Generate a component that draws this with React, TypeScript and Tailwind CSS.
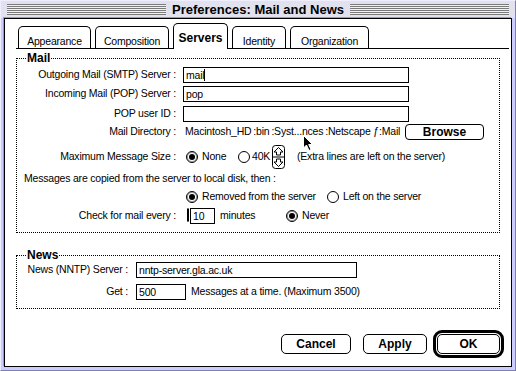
import React from 'react';

const body = "font-['Liberation_Sans',Arial,sans-serif] text-[10.5px] tracking-[-0.2px] text-black whitespace-nowrap";
const bold = "font-['Liberation_Sans',Arial,sans-serif] font-bold text-[12px] tracking-normal text-black";
const stripes =
  'flex-1 h-[11px] bg-[repeating-linear-gradient(to_bottom,#7a7a7a_0_1px,#f2f2f2_1px_2px)]';

function Radio({ on = false }: { on?: boolean }) {
  return (
    <span
      className={
        on
          ? 'shrink-0 w-[12px] h-[12px] rounded-full border border-black bg-white flex items-center justify-center shadow-[inset_0_0_0_1px_#9a9a9a]'
          : 'shrink-0 w-[12px] h-[12px] rounded-full border border-black bg-white'
      }
    >
      {on && <span className="w-[6px] h-[6px] rounded-full bg-black" />}
    </span>
  );
}

function Field({ className, value = '', caret = false }: { className: string; value?: string; caret?: boolean }) {
  return (
    <div className={`h-[16px] border border-black bg-white px-[2px] flex items-center leading-[14px] ${className}`}>
      <span>{value}</span>
      {caret && <span className="w-[1px] h-[12px] bg-black" />}
    </div>
  );
}

function Stepper() {
  return (
    <svg width="13" height="24" viewBox="0 0 13 24" className="shrink-0">
      <rect x="0.5" y="0.5" width="12" height="23" rx="3" fill="#fff" stroke="#000" />
      <line x1="1" y1="12" x2="12" y2="12" stroke="#000" />
      <polygon points="6.5,2.5 11,7 8.5,7 8.5,10 4.5,10 4.5,7 2,7" fill="#fff" stroke="#000" />
      <polygon points="6.5,21.5 11,17 8.5,17 8.5,14 4.5,14 4.5,17 2,17" fill="#fff" stroke="#000" />
    </svg>
  );
}

const tabs = [
  { label: 'Appearance', cls: 'w-[73px]' },
  { label: 'Composition', cls: 'w-[74px]' },
  { label: 'Servers', cls: 'w-[55px]', active: true },
  { label: 'Identity', cls: 'w-[54px]' },
  { label: 'Organization', cls: 'w-[79px]' },
];

export default function App() {
  return (
    <div className={`relative w-[516px] h-[371px] bg-[#ccccff] border border-t-[#eeeeff] border-l-[#eeeeff] border-r-[#8080b0] border-b-[#8080b0] flex flex-col ${body}`}>
      {/* title bar */}
      <div className="h-[17px] shrink-0 flex items-center px-[6px] bg-[#e2e2ee]">
        <div className={stripes} />
        <div className={`px-[6px] leading-[17px] ${bold} text-[13px]`}>Preferences: Mail and News</div>
        <div className={stripes} />
      </div>

      <div className="flex-1 mx-[3px] mb-[3px] border border-black bg-white flex flex-col shadow-[-1px_-1px_0_#9999cc]">
        {/* tabs */}
        <div className="mt-[4px] ml-[11px] mr-[2px] h-[26px] shrink-0 border-b border-black flex items-end gap-[4px] pl-[2px]">
          {tabs.map((t) =>
            t.active ? (
              <div
                key={t.label}
                className={`${t.cls} h-[26px] -mb-[1px] relative z-10 bg-white border border-b-0 border-black rounded-t-[5px] flex items-center justify-center pt-[2px] ${bold}`}
              >
                {t.label}
              </div>
            ) : (
              <div
                key={t.label}
                className={`${t.cls} h-[22px] bg-white border border-b-0 border-black rounded-t-[5px] flex items-center justify-center pt-[7px] leading-[12px]`}
              >
                {t.label}
              </div>
            )
          )}
        </div>

        {/* Mail */}
        <fieldset className="mt-[3px] ml-[11px] w-[484px] border border-dotted border-black pb-[7px]">
          <legend className={`ml-[9px] px-[1px] h-[13px] leading-[13px] ${bold}`}>Mail</legend>
          <div className="h-[19px] flex items-center">
            <span className="w-[159px] text-right">Outgoing Mail (SMTP) Server :</span>
            <Field className="ml-[7px] w-[226px]" value="mail" caret />
          </div>
          <div className="h-[20px] flex items-center">
            <span className="w-[159px] text-right">Incoming Mail (POP) Server :</span>
            <Field className="ml-[7px] w-[226px]" value="pop" />
          </div>
          <div className="h-[20px] flex items-center">
            <span className="w-[159px] text-right">POP user ID :</span>
            <Field className="ml-[7px] w-[226px]" />
          </div>
          <div className="h-[16px] flex items-center">
            <span className="w-[159px] text-right">Mail Directory :</span>
            <span className="ml-[9px] w-[220px] overflow-hidden">
              Macintosh_HD&thinsp;:bin&thinsp;:Syst...nces&thinsp;:Netscape ƒ:Mail
            </span>
            <button className={`w-[79px] h-[16px] rounded-[4px] border border-black bg-white leading-[14px] ${bold}`}>
              Browse
            </button>
          </div>
          <div className="mt-[5px] h-[24px] flex items-center">
            <span className="w-[159px] text-right">Maximum Message Size :</span>
            <div className="ml-[7px] w-[55px] flex items-center">
              <span className="ml-[3px]"><Radio on /></span>
              <span className="ml-[4px]">None</span>
            </div>
            <Radio />
            <span className="ml-[2px] w-[20px]">40K</span>
            <Stepper />
            <span className="ml-[12px]">(Extra lines are left on the server)</span>
          </div>
          <div className="mt-[2px] h-[16px] flex items-center pl-[7px]">
            Messages are copied from the server to local disk, then :
          </div>
          <div className="mt-[2px] h-[16px] flex items-center">
            <div className="ml-[166px] w-[144px] flex items-center">
              <span className="ml-[3px]"><Radio on /></span>
              <span className="ml-[4px]">Removed from the server</span>
            </div>
            <Radio />
            <span className="ml-[4px]">Left on the server</span>
          </div>
          <div className="mt-[2px] h-[18px] flex items-center">
            <span className="w-[159px] text-right">Check for mail every :</span>
            <div className="ml-[7px] w-[103px] flex items-center">
              <span className="ml-[4px]"><Radio /></span>
              <Field className="ml-[1px] w-[25px]" value="10" />
              <span className="ml-[5px]">minutes</span>
            </div>
            <Radio on />
            <span className="ml-[4px]">Never</span>
          </div>
        </fieldset>

        {/* News */}
        <fieldset className="mt-[16px] ml-[11px] w-[484px] border border-dotted border-black pb-[8px]">
          <legend className={`ml-[9px] px-[1px] h-[13px] leading-[13px] ${bold}`}>News</legend>
          <div className="h-[16px] flex items-center">
            <span className="w-[111px] text-right">News (NNTP) Server :</span>
            <Field className="ml-[8px] w-[221px]" value="nntp-server.gla.ac.uk" />
          </div>
          <div className="mt-[6px] h-[16px] flex items-center">
            <span className="w-[111px] text-right">Get :</span>
            <Field className="ml-[8px] w-[50px]" value="500" />
            <span className="ml-[5px]">Messages at a time. (Maximum 3500)</span>
          </div>
        </fieldset>

        {/* buttons */}
        <div className="mt-auto mb-[8px] mr-[7px] flex justify-end items-center">
          <button className={`w-[70px] h-[20px] rounded-[5px] border border-black bg-white ${bold}`}>Cancel</button>
          <button className={`ml-[12px] w-[64px] h-[20px] rounded-[5px] border border-black bg-white ${bold}`}>Apply</button>
          <div className="ml-[6px] w-[71px] h-[28px] border-[3px] border-black rounded-[9px] p-[1px]">
            <button className={`w-full h-full rounded-[5px] border border-black bg-white ${bold}`}>OK</button>
          </div>
        </div>
      </div>

      {/* mouse pointer */}
      <svg width="11" height="17" viewBox="0 0 11 17" className="absolute left-[302px] top-[134px]">
        <path d="M0.5 0.5 L0.5 13 L3.5 10 L6 15.5 L8 14.5 L5.7 9.5 L9.5 9.5 Z" fill="#000" stroke="#fff" strokeWidth="1" />
      </svg>
    </div>
  );
}
